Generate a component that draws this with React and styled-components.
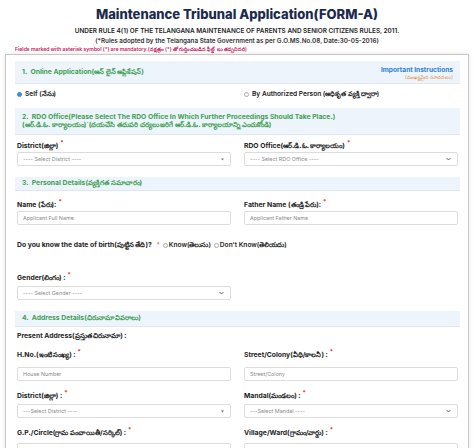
import React from 'react';
import styled, { createGlobalStyle } from 'styled-components';

const GlobalStyle = createGlobalStyle`
  body {
    margin: 0;
    background: #ffffff;
    font-family: Inter, "Noto Sans", "DejaVu Sans", sans-serif;
    color: #222;
  }
`;

const Page = styled.div`
  width: 474px;
  height: 448px;
  overflow: hidden;
  padding: 0 5px;
  box-sizing: border-box;
`;

const Header = styled.div`
  text-align: center;
  padding-top: 4px;
`;

const Title = styled.h1`
  margin: 0;
  font-size: 13px;
  line-height: 20px;
  font-weight: 800;
  color: #1c2a4e;
`;

const SubTitle = styled.div`
  font-size: 6.4px;
  line-height: 10px;
  font-weight: 600;
  color: #222;
  margin-top: 2px;
`;

const Rules = styled.div`
  font-size: 6.3px;
  line-height: 11px;
  font-weight: 600;
  color: #333;
`;

const Mandatory = styled.div`
  font-size: 5.1px;
  line-height: 7px;
  font-weight: 600;
  color: #c2185b;
  padding-left: 10px;
  margin-top: -1px;
`;

const Card = styled.div`
  margin-top: 1px;
  border: 1px solid #c8c8c8;
  border-bottom: none;
  box-shadow: 0 0 4px rgba(0, 0, 0, 0.12);
  padding: 6px 8px 0 9px;
  height: 400px;
`;

const SectionHeader = styled.div`
  display: flex;
  justify-content: space-between;
  align-items: center;
  background: #eef4fb;
  border-bottom: 1px solid #dfe8f2;
  height: ${p => p.$h}px;
  margin-top: ${p => p.$mt || 0}px;
  padding: 0 7px;
  box-sizing: border-box;
`;

const SectionTitle = styled.div`
  font-size: 6.8px;
  line-height: 8.5px;
  font-weight: 700;
  color: #3e9f52;
`;

const Instructions = styled.div`
  text-align: right;
  padding-top: 2px;
`;

const InstrTitle = styled.div`
  font-size: 6.6px;
  line-height: 8px;
  font-weight: 700;
  color: #2f7fd3;
`;

const InstrSub = styled.div`
  font-size: 5px;
  line-height: 6px;
  color: #e08b3c;
`;

const RadioRow = styled.div`
  display: grid;
  grid-template-columns: 1fr 1fr;
  column-gap: 13px;
  height: 20px;
  align-items: center;
  padding: 0 2px;
`;

const RadioLabel = styled.label`
  display: inline-flex;
  align-items: center;
  gap: ${p => p.$gap ?? 3}px;
  font-size: 6.6px;
  font-weight: 600;
  color: #222;
  white-space: nowrap;
`;

const RadioDot = styled.span`
  width: 3px;
  height: 3px;
  border-radius: 50%;
  border: 1px solid ${p => (p.$on ? '#3d8bd9' : '#aaa')};
  background: ${p => (p.$on ? '#3d8bd9' : '#fff')};
  flex-shrink: 0;
`;

const Grid = styled.div`
  display: grid;
  grid-template-columns: 1fr 1fr;
  column-gap: 13px;
  padding: 0 2px;
  margin-top: ${p => p.$mt || 0}px;
`;

const Field = styled.div`
  display: flex;
  flex-direction: column;
  gap: ${p => p.$gap || 0}px;
`;

const Label = styled.div`
  font-size: 6.8px;
  line-height: 12px;
  height: 12px;
  font-weight: 700;
  color: #222;
  white-space: nowrap;
  margin-top: ${p => p.$mt || 0}px;
`;

const Star = styled.sup`
  color: #e53935;
  font-size: 6px;
  margin-left: 2px;
  vertical-align: 3px;
  line-height: 0;
`;

const Box = styled.div`
  height: 14px;
  border: 1px solid #dcdcdc;
  border-radius: 2px;
  background: #fff;
  box-sizing: border-box;
  display: flex;
  align-items: center;
  justify-content: space-between;
  padding: 0 6px 0 5px;
  font-size: 5.4px;
  color: #8a8a8a;
`;

const HalfRow = styled.div`
  display: grid;
  grid-template-columns: 1fr 1fr;
  column-gap: 13px;
  padding: 0 2px;
`;

const InlineRow = styled.div`
  display: flex;
  align-items: center;
  gap: 3px;
  height: 12px;
  margin-top: 14px;
  padding: 0 2px;
`;

const Chevron = () => (
  <svg width="5" height="4" viewBox="0 0 10 8">
    <path d="M1 2 L5 6 L9 2" fill="none" stroke="#555" strokeWidth="1.8" />
  </svg>
);

const Caret = () => (
  <svg width="3" height="3" viewBox="0 0 6 6">
    <path d="M0 1 L6 1 L3 5 Z" fill="#777" />
  </svg>
);

const Select = ({ text, chevron }) => (
  <Box>
    <span>{text}</span>
    {chevron ? <Chevron /> : <Caret />}
  </Box>
);

const Input = ({ text }) => (
  <Box>
    <span>{text}</span>
  </Box>
);

export default function App() {
  return (
    <Page>
      <GlobalStyle />
      <Header>
        <Title>Maintenance Tribunal Application(FORM-A)</Title>
        <SubTitle>
          UNDER RULE 4(1) OF THE TELANGANA MAINTENANCE OF PARENTS AND SENIOR CITIZENS RULES, 2011.
        </SubTitle>
        <Rules>
          (*Rules adopted by the Telangana State Government as per G.O.MS.No.08, Date:30-05-2016)
        </Rules>
      </Header>
      <Mandatory>
        Fields marked with asterisk symbol (*) are mandatory.(నక్షత్రం (*) తో గుర్తించబడిన ఫీల్డ్ లు తప్పనిసరి)
      </Mandatory>

      <Card>
        <SectionHeader $h={23}>
          <SectionTitle>1.&nbsp; Online Application(ఆన్ లైన్ అప్లికేషన్)</SectionTitle>
          <Instructions>
            <InstrTitle>Important Instructions</InstrTitle>
            <InstrSub>(ముఖ్యమైన సూచనలు)</InstrSub>
          </Instructions>
        </SectionHeader>
        <RadioRow>
          <RadioLabel>
            <RadioDot $on />
            Self (నేను)
          </RadioLabel>
          <RadioLabel>
            <RadioDot />
            By Authorized Person (అధికృత వ్యక్తి ద్వారా)
          </RadioLabel>
        </RadioRow>

        <SectionHeader $h={27} $mt={4}>
          <SectionTitle>
            2.&nbsp; RDO Office(Please Select The RDO Office In Which Further Proceedings Should Take Place.)
            <br />
            (ఆర్.డి.ఓ. కార్యాలయం)`(దయచేసి తదుపరి చర్యలు జరిగే ఆర్.డి.ఓ. కార్యాలయాన్ని ఎంచుకోండి)
          </SectionTitle>
        </SectionHeader>
        <Grid $mt={5}>
          <Field>
            <Label>District(జిల్లా)<Star>*</Star></Label>
            <Select text="---- Select District ----" />
          </Field>
          <Field>
            <Label>RDO Office(ఆర్.డి.ఓ. కార్యాలయం)<Star>*</Star></Label>
            <Select text="---- Select RDO Office ----" chevron />
          </Field>
        </Grid>

        <SectionHeader $h={14} $mt={11}>
          <SectionTitle>3.&nbsp; Personal Details(వ్యక్తిగత సమాచారం)</SectionTitle>
        </SectionHeader>
        <Grid $mt={8}>
          <Field>
            <Label>Name (పేరు):<Star>*</Star></Label>
            <Input text="Applicant Full Name" />
          </Field>
          <Field>
            <Label>Father Name (తండ్రి పేరు):<Star>*</Star></Label>
            <Input text="Applicant Father Name" />
          </Field>
        </Grid>

        <InlineRow>
          <Label>Do you know the date of birth(పుట్టిన తేది)?</Label>
          <Star>*</Star>
          <RadioLabel $gap={1}>
            <RadioDot />
            Know(తెలుసు)
          </RadioLabel>
          <RadioLabel $gap={1}>
            <RadioDot />
            Don't Know(తెలియదు)
          </RadioLabel>
        </InlineRow>

        <Grid $mt={21}>
          <Field $gap={2}>
            <Label>Gender(లింగం) :<Star>*</Star></Label>
            <Select text="---- Select Gender ----" chevron />
          </Field>
        </Grid>

        <SectionHeader $h={16} $mt={11}>
          <SectionTitle>4.&nbsp; Address Details(చిరునామా వివరాలు)</SectionTitle>
        </SectionHeader>
        <HalfRow>
          <Label $mt={3}>Present Address(ప్రస్తుత చిరునామా) :</Label>
        </HalfRow>
        <Grid $mt={7}>
          <Field $gap={6}>
            <Label>H.No.(ఇంటి సంఖ్య) :<Star>*</Star></Label>
            <Input text="House Number" />
          </Field>
          <Field $gap={6}>
            <Label>Street/Colony(వీధి/కాలనీ) :<Star>*</Star></Label>
            <Input text="Street/Colony" />
          </Field>
        </Grid>
        <Grid $mt={9}>
          <Field $gap={2}>
            <Label>District(జిల్లా) :<Star>*</Star></Label>
            <Select text="---Select District ----" />
          </Field>
          <Field $gap={2}>
            <Label>Mandal(మండలం) :<Star>*</Star></Label>
            <Select text="---Select Mandal ----" chevron />
          </Field>
        </Grid>
        <Grid $mt={9}>
          <Field $gap={4}>
            <Label>G.P./Circle(గ్రామ పంచాయితీ/సర్కిల్) :<Star>*</Star></Label>
            <Select text="---- Select G.P./Circle ----" />
          </Field>
          <Field $gap={4}>
            <Label>Village/Ward(గ్రామం/వార్డు) :<Star>*</Star></Label>
            <Select text="---- Select Village/Ward ----" chevron />
          </Field>
        </Grid>
      </Card>
    </Page>
  );
}
